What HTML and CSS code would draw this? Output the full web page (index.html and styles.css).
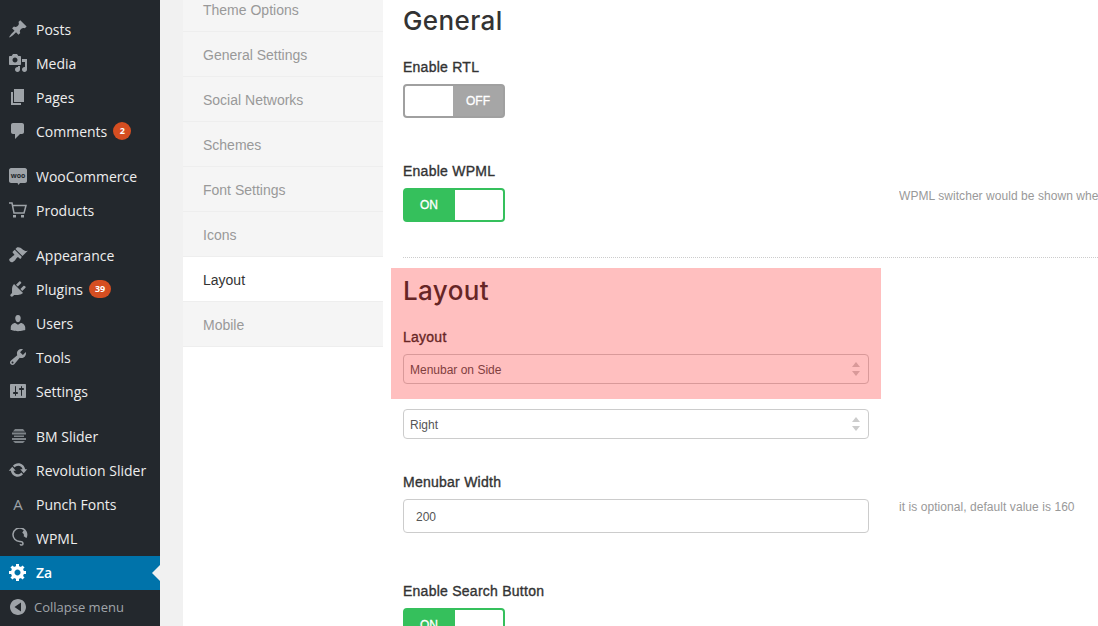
FILE: index.html
```html
<!DOCTYPE html>
<html lang="en">
<head>
  <meta charset="UTF-8">
  <title>Theme Options - Layout</title>
  <link rel="stylesheet" href="styles.css">
</head>
<body>
  <aside class="adminmenu">
    <ul class="menu-group">
      <li class="menu-item"><svg class="menu-icon" viewBox="0 0 20 20"><path d="M10.44 3.02l1.82-1.82 6.36 6.35-1.83 1.82c-1.05-.68-2.48-.57-3.41.36l-.75.75c-.92.93-1.04 2.35-.35 3.41l-1.83 1.82-2.41-2.41-2.8 2.79c-.42.42-3.38 2.71-3.8 2.29s1.86-3.39 2.28-3.81l2.79-2.79L4.1 9.36l1.83-1.82c1.05.69 2.48.57 3.4-.36l.75-.75c.93-.92 1.05-2.35.36-3.41z"/></svg>Posts</li>
      <li class="menu-item"><svg class="menu-icon" viewBox="0 0 20 20"><path d="M13 11V4c0-.55-.45-1-1-1h-1.67L9 1H5L3.67 3H2c-.55 0-1 .45-1 1v7c0 .55.45 1 1 1h10c.55 0 1-.45 1-1zM7 4.5c1.38 0 2.5 1.12 2.5 2.5S8.38 9.5 7 9.5 4.5 8.38 4.5 7 5.62 4.5 7 4.5zM14 6h5v10.5c0 1.38-1.12 2.5-2.5 2.5S14 17.88 14 16.5s1.12-2.5 2.5-2.5c.17 0 .34.02.5.05V9h-3V6zm-4 8.05V13h2v3.5c0 1.38-1.12 2.5-2.5 2.5S7 17.88 7 16.5 8.12 14 9.5 14c.17 0 .34.02.5.05z"/></svg>Media</li>
      <li class="menu-item"><svg class="menu-icon" viewBox="0 0 20 20"><path d="M6 15V2h10v13H6zm-1 1h8v2H3V5h2v11z"/></svg>Pages</li>
      <li class="menu-item"><svg class="menu-icon" viewBox="0 0 20 20"><path d="M5 2h9c1.1 0 2 .9 2 2v7c0 1.1-.9 2-2 2h-2l-5 5v-5H5c-1.1 0-2-.9-2-2V4c0-1.1.9-2 2-2z"/></svg>Comments<span class="badge">2</span></li>
    </ul>
    <ul class="menu-group">
      <li class="menu-item"><svg class="menu-icon" viewBox="0 0 20 20"><path d="M3 2h14c1 0 2 1 2 2v11c0 1-1 2-2 2h-5l-1.500 2-1-2H3c-1 0-2-1-2-2V4c0-1 1-2 2-2z"/><text class="woo-text" x="10" y="12" text-anchor="middle">woo</text></svg>WooCommerce</li>
      <li class="menu-item"><svg class="menu-icon" viewBox="0 0 20 20"><path class="line-icon" d="M1 3h3l2 10h10l2-7.500H4.500"/><path d="M5 15h3v2.500H5zM13 15h3v2.500h-3z"/></svg>Products</li>
    </ul>
    <ul class="menu-group">
      <li class="menu-item"><svg class="menu-icon" viewBox="0 0 20 20"><path d="M14.48 11.06L7.41 3.99l1.5-1.5c.5-.56 2.3-.47 3.51.32 1.21.8 1.43 1.28 2.91 2.1 1.18.64 2.45 1.26 4.45.85zm-.71.71L6.7 4.7 4.93 6.47c-.39.39-.39 1.02 0 1.41l1.06 1.06c.39.39.39 1.03 0 1.42-.6.6-1.43 1.11-2.21 1.69-.35.26-.7.53-1.01.84C1.43 13.23.4 14.93 2 16.5 3.57 18.1 5.27 17.07 6.61 15.73c.31-.31.58-.66.84-1.01.58-.78 1.09-1.61 1.69-2.21.39-.39 1.03-.39 1.42 0l1.06 1.06c.39.39 1.02.39 1.41 0z"/></svg>Appearance</li>
      <li class="menu-item"><svg class="menu-icon" viewBox="0 0 20 20"><path d="M13.11 4.36L9.87 7.6 8 5.73l3.24-3.24c.35-.34 1.05-.2 1.56.32.52.51.66 1.21.31 1.55zm-8 1.77l.91-1.12 9.01 9.01-1.19.84c-.71.71-2.63 1.16-3.82 1.16H6.14L4.9 17.26c-.59.59-1.54.59-2.12 0-.59-.58-.59-1.53 0-2.12l1.24-1.24v-3.88c0-1.13.4-3.19 1.09-3.89zm7.26 3.97l3.24-3.24c.34-.35 1.04-.21 1.55.31.52.51.66 1.21.31 1.55l-3.24 3.25z"/></svg>Plugins<span class="badge">39</span></li>
      <li class="menu-item"><svg class="menu-icon" viewBox="0 0 20 20"><path d="M10 9.250c-2.270 0-2.730-3.440-2.730-3.440C7 4.020 7.820 2 9.970 2c2.160 0 2.980 2.020 2.710 3.810 0 0-.41 3.440-2.680 3.440zm0 2.570L12.720 10c2.390 0 4.520 2.330 4.520 4.530v2.490s-3.650 1.130-7.240 1.130c-3.650 0-7.240-1.130-7.240-1.130v-2.490c0-2.250 1.940-4.480 4.470-4.480z"/></svg>Users</li>
      <li class="menu-item"><svg class="menu-icon" viewBox="0 0 20 20"><path d="M16.68 9.770c-1.340 1.340-3.300 1.670-4.950.99l-5.410 6.520c-.99.99-2.590.99-3.580 0s-.99-2.590 0-3.570l6.520-5.420c-.68-1.650-.35-3.610.99-4.950 1.280-1.280 3.120-1.620 4.720-1.060l-2.890 2.890 2.820 2.820 2.860-2.870c.53 1.580.18 3.390-1.080 4.650zM3.810 16.210c.4.39 1.040.39 1.430 0 .4-.4.4-1.040 0-1.430-.39-.4-1.030-.4-1.430 0-.39.39-.39 1.030 0 1.430z"/></svg>Tools</li>
      <li class="menu-item"><svg class="menu-icon" viewBox="0 0 20 20"><path d="M18 16V4c0-.55-.45-1-1-1H3c-.55 0-1 .45-1 1v12c0 .55.45 1 1 1h14c.55 0 1-.45 1-1zM8 11h1c.55 0 1 .45 1 1s-.45 1-1 1H8v1.500c0 .28-.22.5-.5.5s-.5-.22-.5-.5V13H6c-.55 0-1-.45-1-1s.45-1 1-1h1V5.500c0-.28.22-.5.5-.5s.5.22.5.5V11zm5-2h-1c-.55 0-1-.45-1-1s.45-1 1-1h1V5.500c0-.28.22-.5.5-.5s.5.22.5.5V7h1c.55 0 1 .45 1 1s-.45 1-1 1h-1v5.500c0 .28-.22.5-.5.5s-.5-.22-.5-.5V9z"/></svg>Settings</li>
    </ul>
    <ul class="menu-group">
      <li class="menu-item"><svg class="menu-icon" viewBox="0 0 20 20"><path fill-opacity="0.75" d="M7 3h8l2 2.500H5zM4 6.500h14v2H4zM6 9.500h10v1.500H6zM4 12h14v2H4zM5 15h12l-2 2H7z"/></svg>BM Slider</li>
      <li class="menu-item"><svg class="menu-icon" viewBox="0 0 20 20"><path d="M10.200 3.280c3.530 0 6.430 2.610 6.920 6h2.080l-3.500 4-3.500-4h2.320c-.45-1.970-2.210-3.450-4.320-3.450-1.450 0-2.730.71-3.540 1.780L4.950 5.660C6.230 4.200 8.110 3.280 10.200 3.280zm-.4 13.440c-3.520 0-6.430-2.610-6.920-6H.8l3.500-4c1.170 1.330 2.330 2.670 3.500 4H5.480c.45 1.970 2.210 3.450 4.320 3.450 1.450 0 2.730-.71 3.540-1.780l1.710 1.950c-1.280 1.460-3.150 2.380-5.250 2.380z"/></svg>Revolution Slider</li>
      <li class="menu-item"><span class="menu-letter">A</span>Punch Fonts</li>
      <li class="menu-item"><svg class="menu-icon" viewBox="0 0 20 20"><path class="line-icon" d="M18 9.500A6.800 6.800 0 1 0 12 13.500c2 0 3 1 3 2.200 0 1.600-2.500 1.800-2.800.4"/><path class="line-icon wpml-thick" d="M15 3.500c2 1.200 3 3.500 2 5.500"/></svg>WPML</li>
      <li class="menu-item is-current"><svg class="menu-icon" viewBox="0 0 20 20"><path d="M18 12h-2.180c-.17.7-.44 1.350-.81 1.930l1.540 1.540-2.100 2.100-1.540-1.540c-.58.36-1.230.63-1.910.79V19H8v-2.180c-.68-.16-1.330-.43-1.910-.79l-1.540 1.540-2.120-2.120 1.540-1.540c-.36-.58-.63-1.230-.79-1.910H1V9.030h2.170c.16-.7.44-1.350.8-1.940L2.430 5.550l2.100-2.100 1.540 1.540c.58-.37 1.240-.64 1.930-.81V2h3v2.180c.68.16 1.330.43 1.910.79l1.540-1.540 2.120 2.120-1.540 1.540c.36.59.64 1.240.8 1.940H18V12zm-8.500 1.500c1.660 0 3-1.340 3-3s-1.340-3-3-3-3 1.340-3 3 1.340 3 3 3z"/></svg>Za</li>
      <li class="menu-item collapse"><svg class="menu-icon" viewBox="0 0 20 20"><path fill-rule="evenodd" d="M10 2c-4.400 0-8 3.600-8 8s3.600 8 8 8 8-3.600 8-8-3.600-8-8-8zM13 14.500L6.500 10 13 5.500z"/></svg>Collapse menu</li>
    </ul>
  </aside>

  <nav class="tabs">
    <a class="tab">Theme Options</a>
    <a class="tab">General Settings</a>
    <a class="tab">Social Networks</a>
    <a class="tab">Schemes</a>
    <a class="tab">Font Settings</a>
    <a class="tab">Icons</a>
    <a class="tab is-active">Layout</a>
    <a class="tab">Mobile</a>
  </nav>

  <main class="panel">
    <h2 class="panel-title">General</h2>
    <div class="field field-first">
      <label class="field-label">Enable RTL</label>
      <div class="toggle is-off"><span class="toggle-knob"></span><span class="toggle-state">OFF</span></div>
    </div>
    <div class="field field-row">
      <div>
        <label class="field-label">Enable WPML</label>
        <div class="toggle is-on"><span class="toggle-state">ON</span><span class="toggle-knob"></span></div>
      </div>
      <p class="field-help">WPML switcher would be shown when enabled</p>
    </div>
    <hr class="divider">

    <section class="highlight">
      <h2 class="panel-title">Layout</h2>
      <div class="field field-layout">
        <label class="field-label">Layout</label>
        <div class="select-box"><select class="select"><option>Menubar on Side</option></select></div>
      </div>
    </section>
    <div class="select-box select-right"><select class="select"><option>Right</option></select></div>

    <div class="field field-row field-width">
      <div>
        <label class="field-label">Menubar Width</label>
        <input class="text-input" type="text" value="200">
      </div>
      <p class="field-help">it is optional, default value is 160</p>
    </div>
    <div class="field field-search">
      <label class="field-label">Enable Search Button</label>
      <div class="toggle is-on"><span class="toggle-state">ON</span><span class="toggle-knob"></span></div>
    </div>
  </main>
</body>
</html>
```

FILE: styles.css
```css
* {
  box-sizing: border-box;
}

html, body {
  height: 626px;
  overflow: hidden;
}

body {
  display: flex;
  margin: 0;
  background: #f1f1f1;
  font-family: "Liberation Sans", Arial, sans-serif;
  color: #333;
}

/* admin menu */
.adminmenu {
  flex: none;
  width: 160px;
  padding-top: 13px;
  background: #23282d;
  font-family: "Open Sans", sans-serif;
  font-size: 14px;
  color: #eee;
}

.menu-group {
  margin: 0 0 11px;
  padding: 0;
  list-style: none;
}

.menu-group:last-child {
  margin-bottom: 0;
}

.menu-item {
  position: relative;
  display: flex;
  align-items: center;
  height: 34px;
  padding: 0 0 2px 8px;
}

.menu-icon {
  flex: none;
  width: 20px;
  height: 20px;
  margin-right: 8px;
  fill: #9ea3a8;
}

.line-icon {
  fill: none;
  stroke: #9ea3a8;
  stroke-width: 1.5;
}

.wpml-thick {
  stroke-width: 3;
}

.woo-text {
  font-size: 7px;
  font-weight: 700;
  fill: #23282d;
}

.menu-letter {
  flex: none;
  width: 20px;
  margin-right: 8px;
  text-align: center;
  font-size: 15px;
  color: #9ea3a8;
}

.badge {
  min-width: 18px;
  height: 18px;
  margin-left: 6px;
  padding: 0 6px;
  border-radius: 9px;
  background: #d54e21;
  color: #fff;
  font-size: 9px;
  font-weight: 700;
  line-height: 18px;
  text-align: center;
}

.is-current {
  background: #0073aa;
  color: #fff;
  font-weight: 600;
}

.is-current .menu-icon {
  fill: #fff;
}

.is-current::after {
  content: "";
  position: absolute;
  top: 9px;
  right: 0;
  border: 8px solid transparent;
  border-right-color: #f1f1f1;
  border-left-width: 0;
}

.collapse {
  padding-bottom: 0;
  color: #a0a5aa;
  font-size: 13px;
}

.collapse .menu-icon {
  margin-right: 6px;
}

/* tabs */
.tabs {
  flex: none;
  display: flex;
  flex-direction: column;
  width: 200px;
  margin-left: 23px;
  background: #fff;
}

.tab {
  flex: none;
  height: 45px;
  padding-left: 20px;
  border-bottom: 1px solid #eee;
  background: #f5f5f5;
  color: #999;
  font-size: 14px;
  line-height: 46px;
}

.tab:first-child {
  margin-top: -13px;
}

.tab.is-active {
  background: #fff;
  color: #333;
}

/* settings panel */
.panel {
  flex: 1;
  min-width: 0;
  padding-left: 20px;
  background: #fff;
}

.panel-title {
  margin: 0;
  font-family: Inter, sans-serif;
  font-size: 26px;
  font-weight: 500;
  line-height: 41px;
  height: 40px;
  letter-spacing: .4px;
}

.field-label {
  display: block;
  margin-bottom: 7px;
  font-size: 14px;
  font-weight: 400;
  line-height: 20px;
  letter-spacing: .25px;
  color: #333;
  -webkit-text-stroke: .35px #333;
}

.field-first {
  margin-top: 17px;
}

.field-row {
  display: grid;
  grid-template-columns: 466px 1fr;
  column-gap: 30px;
  margin-top: 43px;
}

.field-help {
  margin: 27px 0 0;
  overflow: hidden;
  color: #999;
  font-size: 12px;
  line-height: 16px;
  letter-spacing: .06px;
  white-space: nowrap;
}

.toggle {
  display: flex;
  width: 102px;
  height: 34px;
  border: 2px solid;
  border-radius: 4px;
  overflow: hidden;
}

.toggle-knob {
  width: 48px;
  background: #fff;
}

.toggle-state {
  width: 50px;
  color: #fff;
  font-size: 12px;
  line-height: 30px;
  text-align: center;
  -webkit-text-stroke: .3px #fff;
}

.is-off {
  border-color: #a0a0a0;
  background: #a6a6a6;
}

.is-on {
  border-color: #35c05c;
  background: #35c05c;
}

.is-on .toggle-state {
  padding-right: 2px;
}

.divider {
  height: 0;
  margin: 35px 0 0;
  border: 0;
  border-top: 1px dotted #ccc;
}

/* red highlight lies over the whole group, text included */
.highlight {
  position: relative;
  width: 466px;
  margin-top: 12px;
  padding-bottom: 15px;
}

.highlight::after {
  content: "";
  position: absolute;
  top: -2px;
  right: -12px;
  bottom: 0;
  left: -12px;
  background: rgba(255, 0, 0, .25);
}

.field-layout {
  margin-top: 17px;
}

.select-box {
  position: relative;
  width: 466px;
}

.select-box::before,
.select-box::after {
  content: "";
  position: absolute;
  right: 9px;
  border-style: solid;
  border-color: transparent;
  border-width: 0 4px;
}

.select-box::before {
  top: 8px;
  border-bottom: 5px solid #ccc;
}

.select-box::after {
  bottom: 8px;
  border-top: 5px solid #ccc;
}

.select {
  display: block;
  width: 100%;
  height: 30px;
  padding: 2px 6px 0;
  border: 1px solid #ccc;
  border-radius: 4px;
  background: #fff;
  color: #555;
  font-family: inherit;
  font-size: 12px;
  appearance: none;
}

.select-right {
  margin-top: 10px;
}

.field-width {
  margin-top: 33px;
}

.text-input {
  display: block;
  width: 466px;
  height: 34px;
  padding: 1px 12px 0;
  border: 1px solid #ccc;
  border-radius: 4px;
  color: #555;
  font-family: inherit;
  font-size: 12px;
}

.field-search {
  margin-top: 48px;
}
```
